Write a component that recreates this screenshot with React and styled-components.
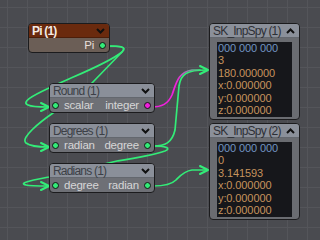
import React from "react";
import styled, { createGlobalStyle } from "styled-components";

const GlobalStyle = createGlobalStyle`
  html, body { margin:0; padding:0; background:#4a4b50; }
  body { font-family:"Liberation Sans", Arial, sans-serif; }
`;

const Canvas = styled.div`
  position:relative; width:320px; height:240px; overflow:hidden;
  background-color:#4a4b50;
  background-image:
    linear-gradient(to right, #54555a 1px, transparent 1px),
    linear-gradient(to bottom, #54555a 1px, transparent 1px);
  background-size:20px 20px;
  background-position:7px 7px;
`;

const Wires = styled.svg`
  position:absolute; left:0; top:0; width:320px; height:240px; z-index:0;
`;

const Node = styled.div`
  position:absolute; left:${p => p.$x}px; top:${p => p.$y}px; width:${p => p.$w}px;
  box-sizing:border-box; border:1px solid #1b1b1d; border-radius:4px; overflow:hidden;
  background:${p => p.$body}; z-index:1;
`;

const Header = styled.div`
  display:flex; align-items:center; justify-content:space-between;
  height:14px; box-sizing:border-box; padding:0 4px 0 3px;
  background:${p => p.$bg}; color:${p => p.$fg};
  font-weight:${p => (p.$bold ? 700 : 400)};
  font-size:12px; letter-spacing:-0.8px; white-space:nowrap;
  border-bottom:1px solid rgba(0,0,0,0.28);
`;

const Row = styled.div`
  display:flex; align-items:center; justify-content:space-between;
  height:14px; padding:0 3px 0 2px;
  font-size:11.5px; letter-spacing:-0.2px; color:${p => p.$fg || "#d6d6d6"};
`;

const Port = styled.span`
  display:flex; align-items:center; gap:5px;
`;

const Dot = styled.span`
  width:5px; height:5px; border-radius:50%;
  background:${p => p.$color}; border:1px solid #141414;
`;

const SpyBody = styled.div`
  padding:4px 7px 2px;
`;

const Display = styled.div`
  height:75px; box-sizing:border-box; padding:0 1px;
  background:#16171b; font-size:11px; line-height:12.4px; letter-spacing:-0.1px;
`;

const Line = styled.div`
  color:${p => (p.$blue ? "#7196c0" : "#c6935d")}; white-space:nowrap;
`;

const Chevron = ({ up }) => (
  <svg width="9" height="6" viewBox="0 0 9 6">
    <polyline
      points={up ? "1,5 4.5,1.5 8,5" : "1,1 4.5,4.5 8,1"}
      fill="none" stroke="#101010" strokeWidth="2" />
  </svg>
);

const GREEN = "#33ec78";

const wires = [
  { d: "M107 46 C118 46 128 46 122 52 C110 62 80 74 62 82 L49 88 C32 96 21 102 28 105 C32 107 38 107 48 107", tip: [49, 107] },
  { d: "M107 46 C118 46 128 46 122 52 L93 82 C80 96 64 106 53 113 C40 122 20 138 26 143 C30 146 38 147 48 147", tip: [49, 147] },
  { d: "M153 146 C165 146 172 143 175 130 L179 86 C181 74 186 70 207 70", tip: [208, 70] },
  { d: "M153 146 C165 146 172 148 165 151 C150 156 130 159 117 161 L49 177 C34 180 17 183 26 185 C30 186 38 186 48 186", tip: [49, 186] },
  { d: "M153 186 C165 186 172 184 176 180 C180 176 184 171 192 170 L207 170", tip: [208, 170] },
];

const arrow = ([x, y]) => `M${x - 8} ${y - 4} L${x} ${y} L${x - 8} ${y + 4}`;

const GrayNode = ({ x, y, title, input, output, outColor }) => (
  <Node $x={x} $y={y} $w={106} $body="#6e7076">
    <Header $bg="#8a8f99" $fg="#3c3f46">
      <span>{title}</span>
      <Chevron />
    </Header>
    <Row>
      <Port><Dot $color={GREEN} />{input}</Port>
      <Port>{output}<Dot $color={outColor || GREEN} /></Port>
    </Row>
  </Node>
);

const SpyNode = ({ x, y, title, lines }) => (
  <Node $x={x} $y={y} $w={91} $body="#6a6c71">
    <Header $bg="#8b909a" $fg="#2d2f35">
      <span>{title}</span>
      <Chevron up />
    </Header>
    <SpyBody>
      <Display>
        {lines.map((l, i) => <Line key={i} $blue={i === 0}>{l}</Line>)}
      </Display>
    </SpyBody>
  </Node>
);

export default function App() {
  return (
    <>
      <GlobalStyle />
      <Canvas>
        <Wires viewBox="0 0 320 240">
          <defs>
            <linearGradient id="mg" gradientUnits="userSpaceOnUse" x1="176" y1="0" x2="200" y2="0">
              <stop offset="0" stopColor="#f020dc" />
              <stop offset="1" stopColor={GREEN} />
            </linearGradient>
          </defs>
          {wires.map((w, i) => (
            <g key={i} fill="none" stroke={GREEN} strokeWidth="1.7" strokeLinecap="round" strokeLinejoin="round">
              <path d={w.d} />
              <path d={arrow(w.tip)} strokeWidth="2" />
            </g>
          ))}
          <path d="M151 107 C162 107 168 104 172 95 C176 84 178 72 192 70 L200 70"
            fill="none" stroke="url(#mg)" strokeWidth="1.7" strokeLinecap="round" />
        </Wires>

        <Node $x={28} $y={23} $w={82} $body="#6b5e56">
          <Header $bg="#6a2a0e" $fg="#f3ebe5" $bold>
            <span>Pi (1)</span>
            <Chevron />
          </Header>
          <Row $fg="#e6dfda">
            <span />
            <Port>Pi<Dot $color={GREEN} /></Port>
          </Row>
        </Node>

        <GrayNode x={49} y={83} title="Round (1)" input="scalar" output="integer" outColor="#f020dc" />
        <GrayNode x={49} y={123} title="Degrees (1)" input="radian" output="degree" />
        <GrayNode x={49} y={163} title="Radians (1)" input="degree" output="radian" />

        <SpyNode x={209} y={23} title="SK_InpSpy (1)"
          lines={["000 000 000", "3", "180.000000", "x:0.000000", "y:0.000000", "z:0.000000"]} />
        <SpyNode x={209} y={123} title="SK_InpSpy (2)"
          lines={["000 000 000", "0", "3.141593", "x:0.000000", "y:0.000000", "z:0.000000"]} />
      </Canvas>
    </>
  );
}
